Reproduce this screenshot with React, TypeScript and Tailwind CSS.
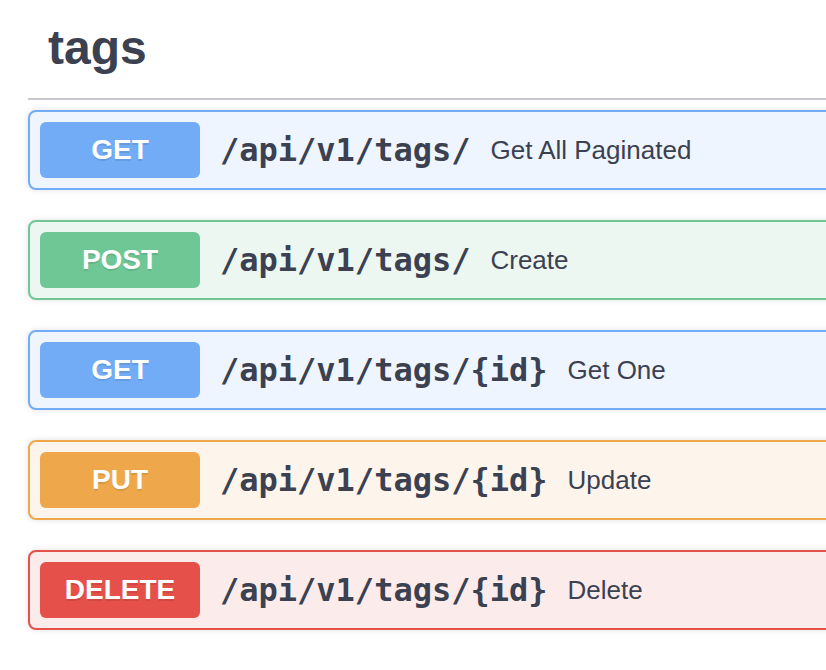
const ops = [
  {
    method: 'GET',
    path: '/api/v1/tags/',
    desc: 'Get All Paginated',
    box: 'border-[#72acf7] bg-[#eef5fe]',
    badge: 'bg-[#72acf7]',
  },
  {
    method: 'POST',
    path: '/api/v1/tags/',
    desc: 'Create',
    box: 'border-[#6ec795] bg-[#edf7f1]',
    badge: 'bg-[#6ec795]',
  },
  {
    method: 'GET',
    path: '/api/v1/tags/{id}',
    desc: 'Get One',
    box: 'border-[#72acf7] bg-[#eef5fe]',
    badge: 'bg-[#72acf7]',
  },
  {
    method: 'PUT',
    path: '/api/v1/tags/{id}',
    desc: 'Update',
    box: 'border-[#eea84b] bg-[#fdf5ec]',
    badge: 'bg-[#eea84b]',
  },
  {
    method: 'DELETE',
    path: '/api/v1/tags/{id}',
    desc: 'Delete',
    box: 'border-[#e5504b] bg-[#fbeceb]',
    badge: 'bg-[#e5504b]',
  },
];

const App = () => {
  return (
    <div className="h-[670px] w-[826px] overflow-hidden bg-white font-['Liberation_Sans',Arial,sans-serif] text-[#3b4151]">
      <div className="ml-[28px] w-[900px]">
        <h3 className="border-b-2 border-[#c6c8cd] pt-[20px] pb-[22px] pl-[20px] text-[48px] font-bold leading-[56px]">
          tags
        </h3>
        <div className="mt-[10px]">
          {ops.map((op, i) => (
            <div
              key={i}
              className={`mb-[30px] flex items-center gap-[20px] rounded-[8px] border-2 p-[10px] shadow-[0_0_6px_rgba(0,0,0,0.12)] ${op.box}`}
            >
              <span
                className={`w-[160px] rounded-[6px] py-[12px] text-center text-[28px] font-bold leading-[32px] text-white [text-shadow:0_2px_0_rgba(0,0,0,0.1)] ${op.badge}`}
              >
                {op.method}
              </span>
              <span className="font-['DejaVu_Sans_Mono',monospace] text-[32px] font-bold leading-[40px]">
                {op.path}
              </span>
              <span className="text-[26px] leading-[32px]">{op.desc}</span>
            </div>
          ))}
        </div>
      </div>
    </div>
  );
};

export default App;
